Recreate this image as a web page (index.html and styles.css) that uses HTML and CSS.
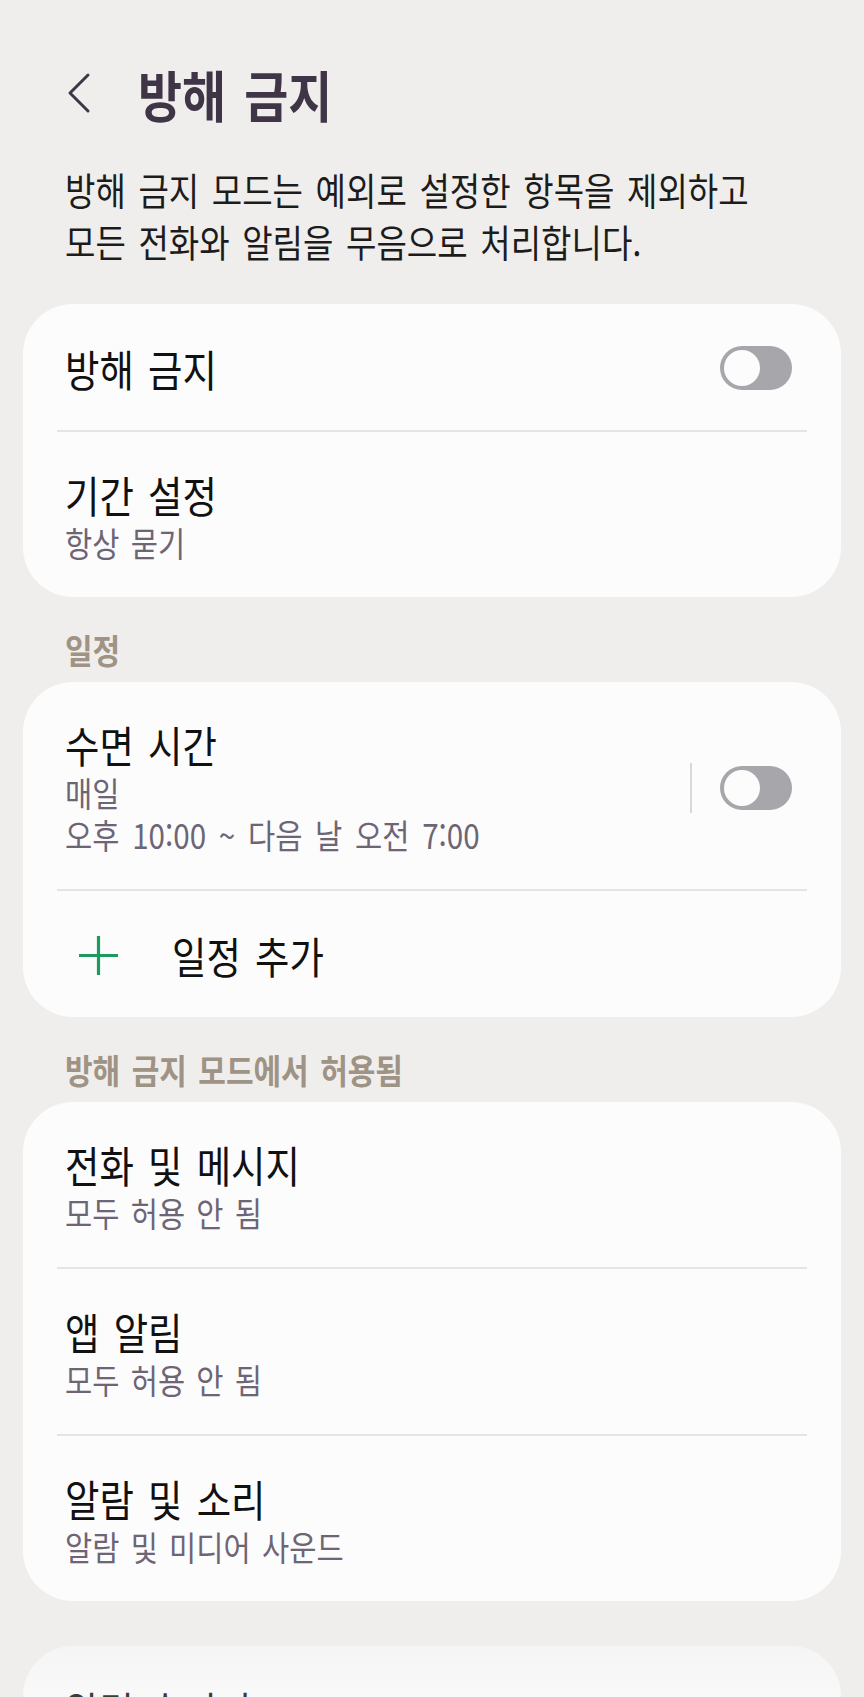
FILE: index.html
```html
<!DOCTYPE html>
<html lang="ko">
<head>
    <meta charset="UTF-8">
    <meta name="viewport" content="width=device-width, initial-scale=1.0">
    <title>방해 금지</title>
    <link rel="stylesheet" href="styles.css">
</head>
<body>
    <div class="screen">
        <div class="top-bar">
            <svg class="back" viewBox="0 0 26 42" fill="none" stroke="#3f3547" stroke-width="3" stroke-linecap="round" stroke-linejoin="round">
                <polyline points="22,3 4,21 22,39"/>
            </svg>
            <h1 class="page-title"><span class="narrow">방해 금지</span></h1>
        </div>

        <div class="intro"><span class="narrow">방해 금지 모드는 예외로 설정한 항목을 제외하고<br>모든 전화와 알림을 무음으로 처리합니다.</span></div>

        <div class="card first">
            <div class="row single with-switch">
                <div class="row-title"><span class="narrow">방해 금지</span></div>
                <span class="switch"></span>
            </div>
            <div class="divider"></div>
            <div class="row">
                <div class="row-title"><span class="narrow">기간 설정</span></div>
                <div class="row-sub"><span class="narrow">항상 묻기</span></div>
            </div>
        </div>

        <div class="section-label"><span class="narrow">일정</span></div>
        <div class="card">
            <div class="row with-switch">
                <div class="row-text">
                    <div class="row-title"><span class="narrow">수면 시간</span></div>
                    <div class="row-sub"><span class="narrow">매일</span></div>
                    <div class="row-sub tight"><span class="narrow">오후 10:00 ~ 다음 날 오전 7:00</span></div>
                </div>
                <div class="switch-wrap">
                    <span class="vsep"></span>
                    <span class="switch"></span>
                </div>
            </div>
            <div class="divider"></div>
            <div class="row single add-row">
                <svg class="plus" viewBox="0 0 41 41" fill="none" stroke="#1e9a5f" stroke-width="3.2">
                    <line x1="20.5" y1="1" x2="20.5" y2="40"/>
                    <line x1="1" y1="20.5" x2="40" y2="20.5"/>
                </svg>
                <div class="row-title"><span class="narrow">일정 추가</span></div>
            </div>
        </div>

        <div class="section-label"><span class="narrow">방해 금지 모드에서 허용됨</span></div>
        <div class="card">
            <div class="row">
                <div class="row-title"><span class="narrow">전화 및 메시지</span></div>
                <div class="row-sub"><span class="narrow">모두 허용 안 됨</span></div>
            </div>
            <div class="divider"></div>
            <div class="row">
                <div class="row-title"><span class="narrow">앱 알림</span></div>
                <div class="row-sub"><span class="narrow">모두 허용 안 됨</span></div>
            </div>
            <div class="divider"></div>
            <div class="row">
                <div class="row-title"><span class="narrow">알람 및 소리</span></div>
                <div class="row-sub"><span class="narrow">알람 및 미디어 사운드</span></div>
            </div>
        </div>

        <div class="card last">
            <div class="row single">
                <div class="row-title"><span class="narrow">알림 숨기기</span></div>
            </div>
        </div>
    </div>
</body>
</html>
```

FILE: styles.css
```css
* {
    box-sizing: border-box;
}
body {
    margin: 0;
    background-color: #f0eeec;
    font-family: "Noto Sans CJK KR", "Noto Sans", sans-serif;
    color: #111;
}
.screen {
    height: 100vh;
    overflow: hidden;
}
/* condensed look of the phone font */
.narrow {
    display: inline-block;
    vertical-align: top;
    white-space: nowrap;
    word-spacing: .1em;
    transform: scaleX(.87);
    transform-origin: left top;
}
.top-bar {
    display: flex;
    align-items: center;
    height: 60px;
    margin-top: 63px;
    padding-left: 66px;
}
.back {
    width: 26px;
    height: 42px;
    margin-right: 46px;
    flex: none;
}
.page-title {
    margin: 0;
    font-size: 55px;
    line-height: 60px;
    font-weight: 700;
    color: #3f3547;
}
.intro {
    margin: 40px 0 0 65px;
    font-size: 38px;
    line-height: 52px;
    color: #1c1c1c;
}
.card {
    background-color: #fcfcfc;
    border-radius: 50px;
    margin: 0 23px;
}
.card.first {
    margin-top: 37px;
}
.card.last {
    margin-top: 45px;
    background: linear-gradient(#f6f5f5, #fbfbfb 60%);
}
.card.last .row-title {
    color: #3c3c3c;
}
.row {
    padding: 38px 49px 33px 42px;
}
.row.single {
    padding-top: 40px;
    padding-bottom: 38px;
}
.with-switch {
    display: flex;
    align-items: center;
    justify-content: space-between;
}
.row-title {
    font-size: 43px;
    line-height: 48px;
}
.row-sub {
    margin-top: 4px;
    font-size: 34px;
    line-height: 42px;
    color: #6d6575;
}
.row-sub.tight {
    margin-top: 0;
}
.row-sub.tight .narrow {
    word-spacing: .15em;
}
.divider {
    height: 2px;
    margin: 0 34px;
    background-color: #e5e4e5;
}
.switch-wrap {
    display: flex;
    align-items: center;
}
.vsep {
    width: 2px;
    height: 50px;
    margin-right: 28px;
    background-color: #d9d8da;
}
.switch {
    position: relative;
    flex: none;
    width: 72px;
    height: 44px;
    border-radius: 22px;
    background-color: #a7a7ab;
}
.switch::after {
    content: "";
    position: absolute;
    left: 4px;
    top: 4px;
    width: 36px;
    height: 36px;
    border-radius: 50%;
    background-color: #fcfcfc;
}
.add-row {
    display: flex;
    align-items: center;
    padding-left: 55px;
    padding-top: 38px;
    padding-bottom: 37px;
}
.plus {
    width: 41px;
    height: 41px;
    margin-right: 53px;
    flex: none;
}
.add-row .row-title {
    font-size: 43px;
}
.section-label {
    margin: 32px 0 13px 65px;
    font-size: 34.5px;
    line-height: 40px;
    font-weight: 700;
    color: #9e9384;
}
```
